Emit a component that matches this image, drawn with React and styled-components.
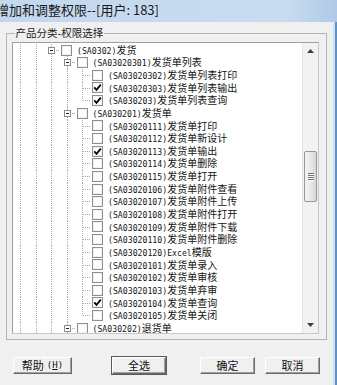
import styled, { createGlobalStyle } from 'styled-components';

const GlobalStyle = createGlobalStyle`
  html, body {
    margin: 0;
    padding: 0;
    background: #f0f0f0;
    overflow: hidden;
  }
  #root {
    width: 337px;
    height: 385px;
  }
`;

const ROW_H = 12.65;
const STEP = 15.5;
const LINE = '#a8a8a8';
const dotV = `repeating-linear-gradient(to bottom, ${LINE} 0 1px, transparent 1px 2px)`;
const dotH = `repeating-linear-gradient(to right, ${LINE} 0 1px, transparent 1px 2px)`;

const leaf = (code, name, checked = false, last = false) => ({
  level: 4,
  kind: 'leaf',
  code,
  name,
  checked,
  last,
});

const rows = [
  { level: 2, kind: 'node', code: 'SA0302', name: '发货' },
  { level: 3, kind: 'node', code: 'SA03020301', name: '发货单列表' },
  leaf('SA03020302', '发货单列表打印'),
  leaf('SA03020303', '发货单列表输出', true),
  leaf('SA030203', '发货单列表查询', true, true),
  { level: 3, kind: 'node', code: 'SA030201', name: '发货单' },
  leaf('SA03020111', '发货单打印'),
  leaf('SA03020112', '发货单新设计'),
  leaf('SA03020113', '发货单输出', true),
  leaf('SA03020114', '发货单删除'),
  leaf('SA03020115', '发货单打开'),
  leaf('SA03020106', '发货单附件查看'),
  leaf('SA03020107', '发货单附件上传'),
  leaf('SA03020108', '发货单附件打开'),
  leaf('SA03020109', '发货单附件下载'),
  leaf('SA03020110', '发货单附件删除'),
  leaf('SA03020120', 'Excel模版'),
  leaf('SA03020101', '发货单录入'),
  leaf('SA03020102', '发货单审核'),
  leaf('SA03020103', '发货单弃审'),
  leaf('SA03020104', '发货单查询', true),
  leaf('SA03020105', '发货单关闭', false, true),
  { level: 3, kind: 'node', code: 'SA030202', name: '退货单' },
];

// split text into half-width (ascii) and full-width runs
const splitRuns = (s) => s.match(/[\x00-\x7f]+|[^\x00-\x7f]+/g) || [];

const TreeRow = ({ level, kind, checked, last, code, name }) => (
  <Row>
    {Array.from({ length: level }, (_, i) => (
      <Guide key={i} />
    ))}
    <Joint $last={last}>{kind === 'node' && <Expander />}</Joint>
    <Check>
      {checked && (
        <svg width="9" height="9" viewBox="0 0 9 9">
          <path d="M1.3 4.4 L3.5 6.8 L7.8 1.6" fill="none" stroke="#000" strokeWidth="1.8" />
        </svg>
      )}
    </Check>
    <Label>
      {splitRuns(`(${code})${name}`).map((run, i) =>
        /^[\x00-\x7f]+$/.test(run) ? <Half key={i}>{run}</Half> : <Full key={i}>{run}</Full>
      )}
    </Label>
  </Row>
);

const App = () => {
  return (
    <>
      <GlobalStyle />
      <Window>
        <TitleBar>
          <TitleText>增加和调整权限--[用户: 183]</TitleText>
        </TitleBar>
        <Frame>
          <Body>
            <GroupBox>
              <Legend>产品分类-权限选择</Legend>
              <ListBox>
                <Rows>
                  {rows.map((r, i) => (
                    <TreeRow key={i} {...r} />
                  ))}
                </Rows>
                <ScrollBar>
                  <ArrowButton>
                    <svg width="7" height="4" viewBox="0 0 7 4">
                      <path d="M0 4 L3.5 0 L7 4 Z" fill="#3d3d3d" />
                    </svg>
                  </ArrowButton>
                  <Track>
                    <Thumb $offset={92} $size={51}>
                      <Grip />
                      <Grip />
                      <Grip />
                      <Grip />
                    </Thumb>
                  </Track>
                  <ArrowButton>
                    <svg width="7" height="4" viewBox="0 0 7 4">
                      <path d="M0 0 L7 0 L3.5 4 Z" fill="#3d3d3d" />
                    </svg>
                  </ArrowButton>
                </ScrollBar>
              </ListBox>
            </GroupBox>
            <Footer>
              <Button $width={59}>
                帮助 <Hot>(<u>H</u>)</Hot>
              </Button>
              <Button $width={54} $ml={40} $default>
                全选
              </Button>
              <Button $width={55} $ml={34}>
                确定
              </Button>
              <Button $width={55} $ml={10}>
                取消
              </Button>
            </Footer>
          </Body>
          <SideEdge />
        </Frame>
      </Window>
    </>
  );
};

export default App;

const Window = styled('div')`
  width: 337px;
  height: 385px;
  display: flex;
  flex-direction: column;
  background: #f0f0f0;
  overflow: hidden;
`;

const TitleBar = styled('div')`
  height: 22px;
  flex: none;
  background: linear-gradient(to right, #c3d8ee 0%, #c9dcf0 85%, #afc9e6 100%);
  overflow: hidden;
`;

const TitleText = styled('div')`
  margin-left: -4px;
  font-family: 'Noto Sans CJK SC', 'Noto Sans', sans-serif;
  font-size: 13px;
  line-height: 20px;
  color: #1a1a1a;
  white-space: nowrap;
`;

const Frame = styled('div')`
  flex: 1;
  display: flex;
`;

const Body = styled('div')`
  flex: 1;
  padding: 5px 5px 0 6px;
  display: flex;
  flex-direction: column;
`;

const SideEdge = styled('div')`
  width: 5px;
  flex: none;
  background: linear-gradient(to right, #eef3f8 0 1px, #cfe0f1 1px 3px, #5b93c6 3px);
`;

const GroupBox = styled('fieldset')`
  margin: 0;
  padding: 2.7px 7px 5px 5px;
  border: 1px solid #b4b4b4;
  min-inline-size: 0;
`;

const Legend = styled('legend')`
  margin-left: 2.5px;
  padding: 0 1px;
  font-family: 'Noto Sans CJK SC', 'Noto Sans', sans-serif;
  font-size: 10.5px;
  line-height: 12px;
  color: #1a1a1a;
`;

const ListBox = styled('div')`
  height: 290px;
  display: flex;
  background: #fff;
  border: 1px solid #a0a0a0;
  border-right-color: #c8c8c8;
  border-bottom-color: #c8c8c8;
  overflow: hidden;
`;

const Rows = styled('div')`
  flex: 1;
  padding-top: 1px;
  overflow: hidden;
`;

const Row = styled('div')`
  height: ${ROW_H}px;
  display: flex;
  align-items: center;
  white-space: nowrap;
`;

const Guide = styled('span')`
  flex: none;
  width: ${STEP}px;
  height: 100%;
  background: ${dotV} 7px 0 / 1px 100% no-repeat;
`;

const Joint = styled('span')`
  flex: none;
  width: ${STEP}px;
  height: 100%;
  display: flex;
  align-items: center;
  justify-content: center;
  background:
    ${dotV} 7px 0 / 1px ${(p) => (p.$last ? '50%' : '100%')} no-repeat,
    ${dotH} 8px 6px / 7.5px 1px no-repeat;
`;

const Expander = styled('span')`
  box-sizing: border-box;
  width: 7px;
  height: 7px;
  border: 1px solid #8c8c8c;
  background: #fff;
  display: flex;
  align-items: center;
  justify-content: center;

  &::after {
    content: '';
    width: 3px;
    height: 1px;
    background: #202020;
  }
`;

const Check = styled('span')`
  box-sizing: border-box;
  flex: none;
  width: 11px;
  height: 11px;
  margin-left: 1.5px;
  border: 1px solid #8f8f8f;
  background: #fff;
  box-shadow: inset 0 0 0 1px #f2f2f2;
  display: flex;
  align-items: center;
  justify-content: center;
`;

const Label = styled('span')`
  margin-left: 5px;
  line-height: ${ROW_H}px;
  color: #141414;
`;

const Half = styled('span')`
  font-family: 'DejaVu Sans Mono', 'Liberation Mono', monospace;
  font-size: 8.2px;
`;

const Full = styled('span')`
  font-family: 'Noto Sans CJK SC', 'Noto Sans', sans-serif;
  font-size: 10px;
`;

const ScrollBar = styled('div')`
  width: 16px;
  flex: none;
  display: flex;
  flex-direction: column;
  background: #f2f2f2;
  border-left: 1px solid #e6e6e6;
  box-sizing: border-box;
`;

const ArrowButton = styled('div')`
  height: 16px;
  flex: none;
  display: flex;
  align-items: center;
  justify-content: center;
`;

const Track = styled('div')`
  flex: 1;
  padding: 0 1px;
`;

const Thumb = styled('div')`
  box-sizing: border-box;
  margin-top: ${(p) => p.$offset}px;
  height: ${(p) => p.$size}px;
  border: 1px solid #979797;
  border-radius: 2px;
  background: linear-gradient(to right, #f4f4f4, #e9e9e9 50%, #d7d7d7);
  display: flex;
  flex-direction: column;
  align-items: center;
  justify-content: center;
  gap: 1px;
`;

const Grip = styled('span')`
  width: 6px;
  height: 1px;
  background: #707070;
  box-shadow: 0 1px 0 #fafafa;
`;

const Footer = styled('div')`
  display: flex;
  margin-top: 17px;
  padding-left: 7px;
`;

const Button = styled('div')`
  box-sizing: border-box;
  width: ${(p) => p.$width}px;
  height: 17px;
  margin-left: ${(p) => p.$ml || 0}px;
  display: flex;
  align-items: center;
  justify-content: center;
  font-family: 'Noto Sans CJK SC', 'Noto Sans', sans-serif;
  font-size: 11px;
  color: #111;
  background: #f0f0f0;
  border: 1px solid;
  border-color: #fff #6a6a6a #6a6a6a #fff;
  box-shadow: inset -1px -1px 0 #a0a0a0
    ${(p) => (p.$default ? ', 0 0 0 1px #5a5a5a' : '')};
`;

const Hot = styled('span')`
  margin-left: 3px;
  font-family: 'DejaVu Sans Mono', monospace;
  font-size: 9px;
`;
